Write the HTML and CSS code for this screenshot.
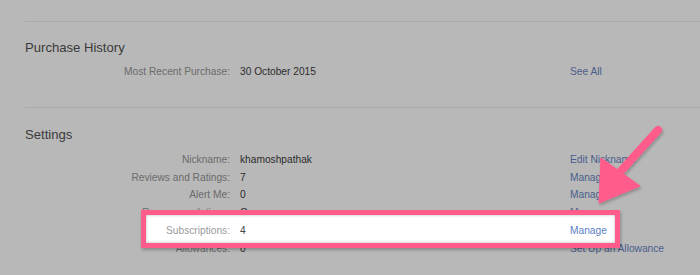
FILE: index.html
```html
<!DOCTYPE html>
<html>
<head>
<meta charset="utf-8">
<link rel="stylesheet" href="styles.css">
</head>
<body>
<div class="page">
  <div class="rule"></div>
  <section class="section first">
    <h2 class="title">Purchase History</h2>
    <div class="rows">
      <div class="row"><span class="label">Most Recent Purchase:</span><span class="value">30 October 2015</span><span class="link">See All</span></div>
    </div>
  </section>
  <div class="rule"></div>
  <section class="section">
    <h2 class="title">Settings</h2>
    <div class="rows">
      <div class="row"><span class="label">Nickname:</span><span class="value">khamoshpathak</span><span class="link">Edit Nickname</span></div>
      <div class="row"><span class="label">Reviews and Ratings:</span><span class="value">7</span><span class="link">Manage</span></div>
      <div class="row"><span class="label">Alert Me:</span><span class="value">0</span><span class="link">Manage</span></div>
      <div class="row"><span class="label">Recommendations:</span><span class="value">On</span><span class="link">Manage</span></div>
      <div class="row row-hl"><span class="label">Subscriptions:</span><span class="value">4</span><span class="link">Manage</span></div>
      <div class="row"><span class="label">Allowances:</span><span class="value">0</span><span class="link">Set Up an Allowance</span></div>
    </div>
  </section>
  <svg class="arrow" width="700" height="275" viewBox="0 0 700 275">
    <defs>
      <filter id="sh" x="-20%" y="-20%" width="140%" height="140%">
        <feDropShadow dx="1" dy="2" stdDeviation="1.5" flood-color="#000" flood-opacity="0.25"/>
      </filter>
    </defs>
    <g filter="url(#sh)" fill="#ff5b8b" stroke="#ff5b8b">
      <line x1="658" y1="130" x2="620" y2="172" stroke-width="8" stroke-linecap="round"/>
      <polygon points="599,203 601,158 640,186" stroke-width="1" stroke-linejoin="round"/>
    </g>
  </svg>
</div>
</body>
</html>
```
FILE: styles.css
```css
html, body {
  margin: 0;
  padding: 0;
}
body {
  width: 700px;
  height: 275px;
  overflow: hidden;
  background: #b8b8b8;
  font-family: "Liberation Sans", Arial, Helvetica, sans-serif;
}
.page {
  position: relative;
  width: 700px;
  height: 275px;
  padding-top: 21px;
  box-sizing: border-box;
}
.rule {
  height: 1px;
  margin-left: 25px;
  background: #a9a9a9;
}
.section {
  padding-left: 25px;
}
.title {
  margin: 0;
  padding-top: 17px;
  font-size: 13.1px;
  font-weight: normal;
  color: #3a3a3a;
  line-height: 18px;
}
.section + .rule + .section .title {
  padding-top: 18px;
}
.rows {
  padding-top: 7px;
}
.first .rows {
  padding-top: 6px;
  padding-bottom: 26px;
}
.row {
  display: grid;
  grid-template-columns: 205px 320px auto;
  column-gap: 10px;
  font-size: 10.2px;
  line-height: 17.8px;
  white-space: nowrap;
}
.label {
  text-align: right;
  color: #6b6b6b;
}
.value {
  color: #2c2c2c;
}
.link {
  color: #4a5d8c;
}
.row-hl {
  position: relative;
  z-index: 1;
}
.row-hl::before {
  content: "";
  position: absolute;
  left: 116px;
  top: -12px;
  width: 469px;
  height: 28px;
  background: #ffffff;
  border: 5px solid #ff5c8c;
  box-shadow: 1px 2px 3px rgba(0,0,0,0.25), inset 0 0 3px rgba(0,0,0,0.3);
  z-index: -1;
}
.row-hl .label { color: #9a9a9a; }
.row-hl .value { color: #444444; }
.row-hl .link { color: #5b80c8; }
.arrow {
  position: absolute;
  left: 0;
  top: 0;
  z-index: 2;
  pointer-events: none;
}
```
